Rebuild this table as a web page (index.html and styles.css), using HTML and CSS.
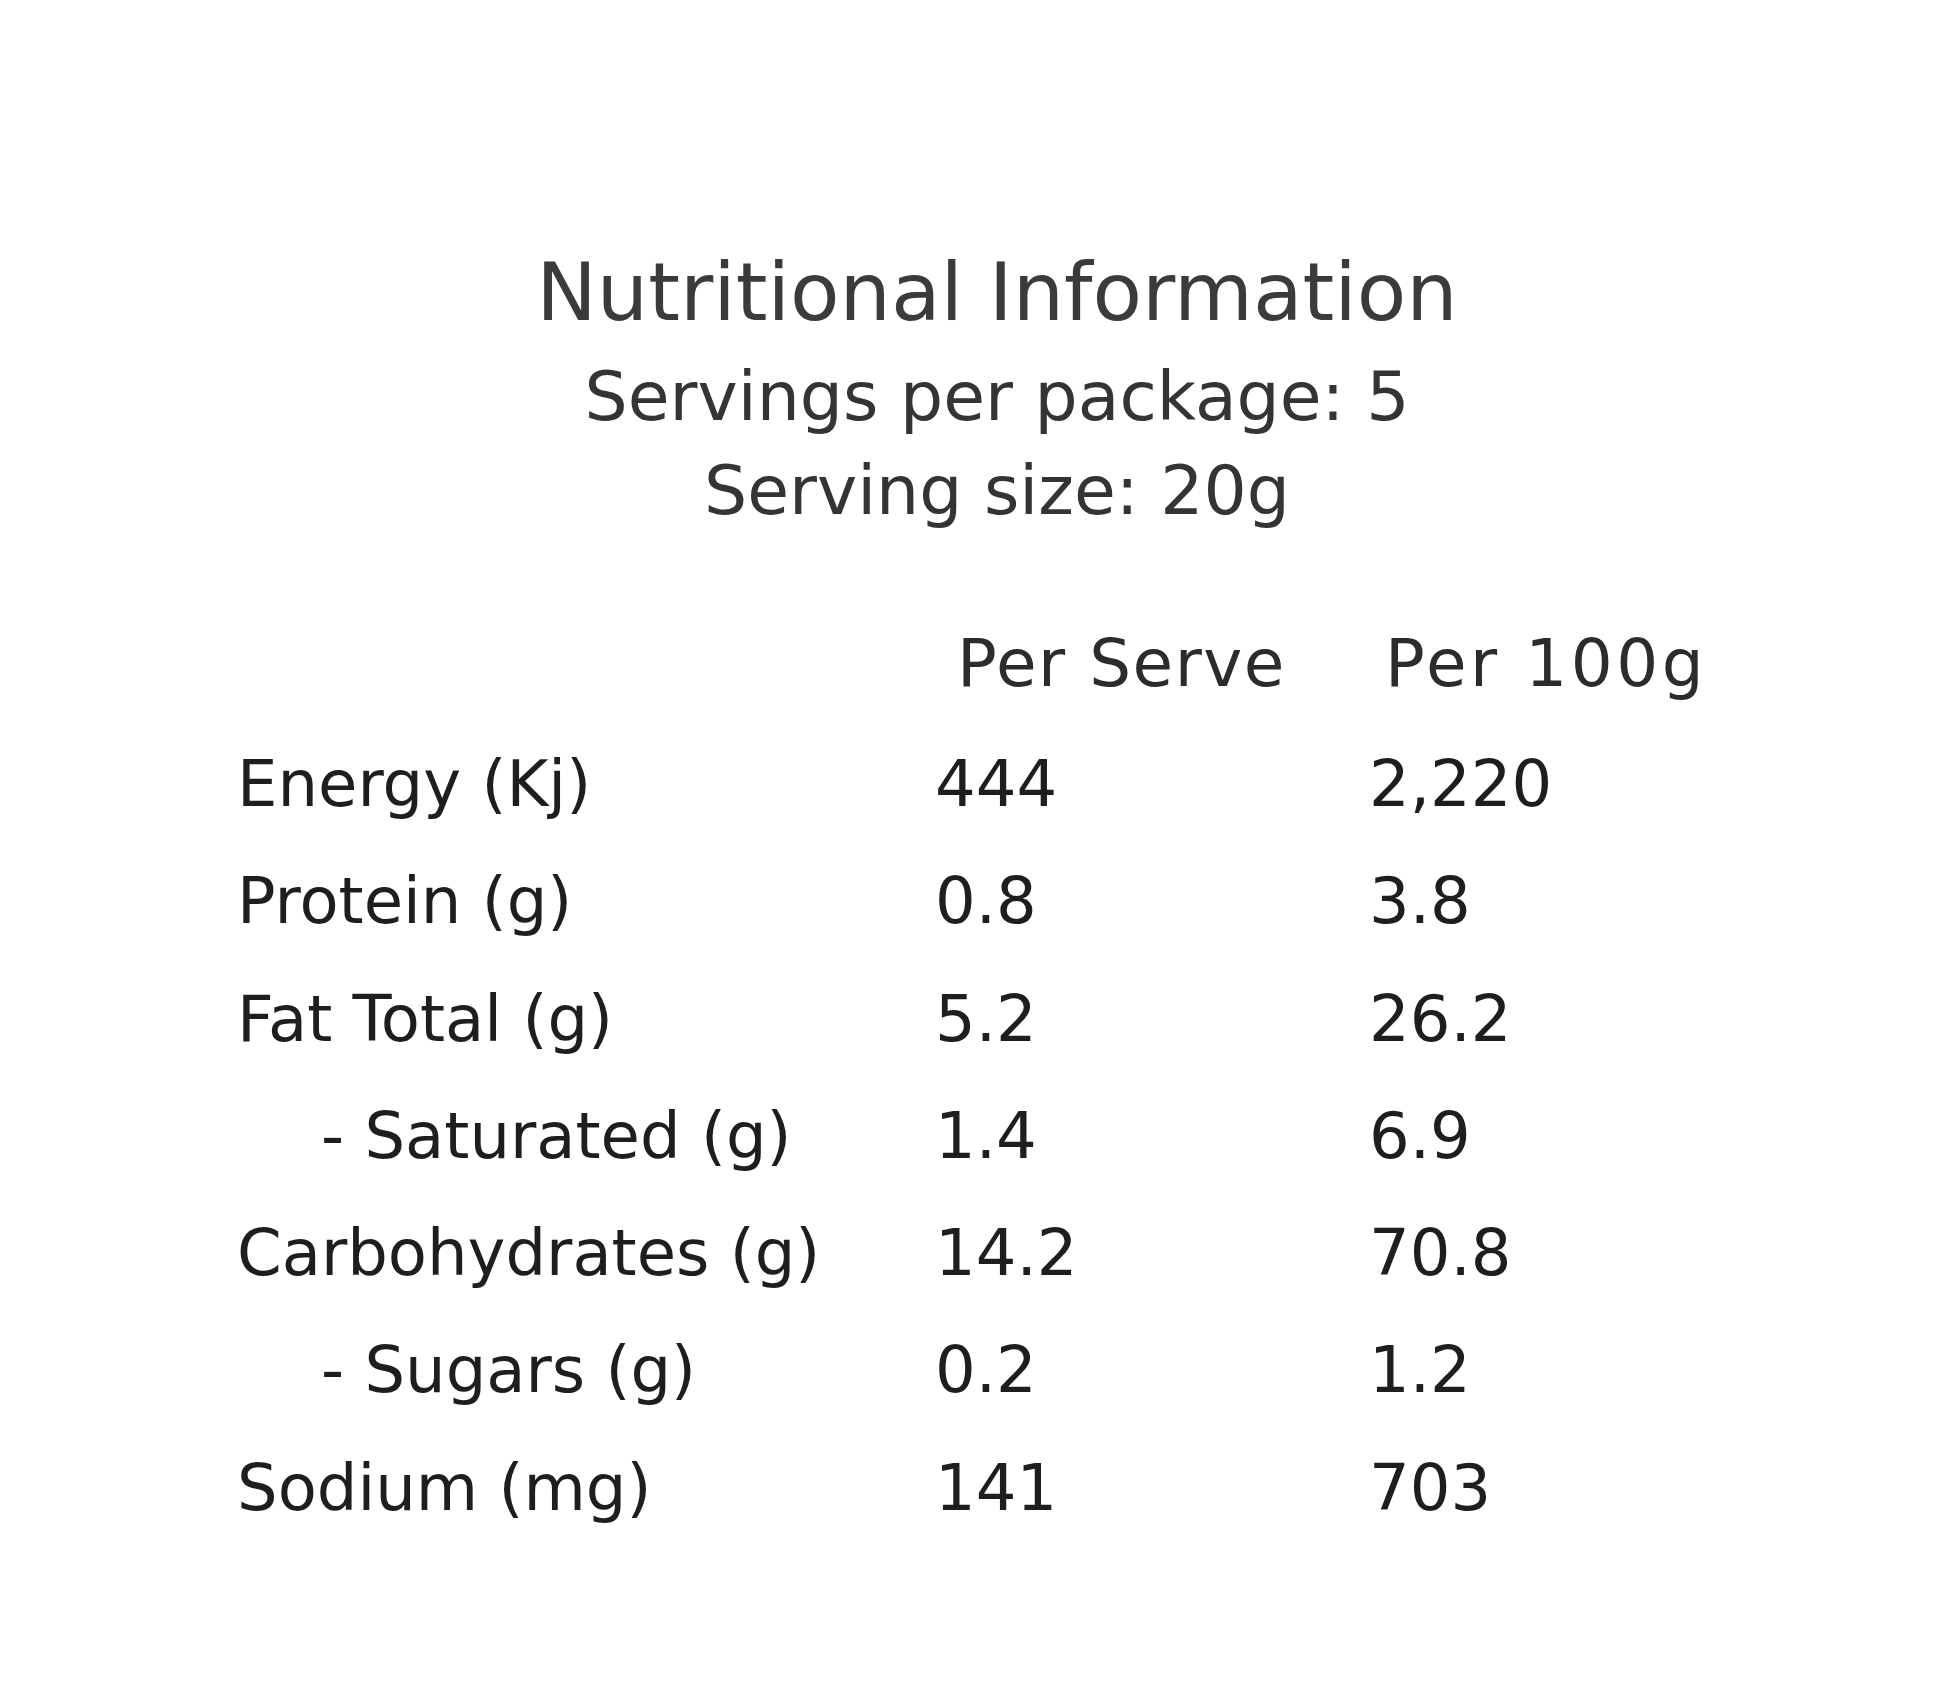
FILE: index.html
```html
<!DOCTYPE html>
<html lang="en">
<head>
<meta charset="utf-8">
<title>Nutritional Information</title>
<link rel="stylesheet" href="styles.css">
</head>
<body>
<main class="panel">
  <header class="head">
    <h1 class="title">Nutritional Information</h1>
    <p class="meta">Servings per package: 5</p>
    <p class="meta">Serving size: 20g</p>
  </header>
  <section class="facts">
    <div class="cell"></div>
    <div class="cell colhead colhead-serve">Per Serve</div>
    <div class="cell colhead colhead-100">Per 100g</div>

    <div class="cell name">Energy (Kj)</div>
    <div class="cell val">444</div>
    <div class="cell val">2,220</div>

    <div class="cell name">Protein (g)</div>
    <div class="cell val">0.8</div>
    <div class="cell val">3.8</div>

    <div class="cell name">Fat Total (g)</div>
    <div class="cell val">5.2</div>
    <div class="cell val">26.2</div>

    <div class="cell name sub">- Saturated (g)</div>
    <div class="cell val">1.4</div>
    <div class="cell val">6.9</div>

    <div class="cell name">Carbohydrates (g)</div>
    <div class="cell val">14.2</div>
    <div class="cell val">70.8</div>

    <div class="cell name sub">- Sugars (g)</div>
    <div class="cell val">0.2</div>
    <div class="cell val">1.2</div>

    <div class="cell name">Sodium (mg)</div>
    <div class="cell val">141</div>
    <div class="cell val">703</div>
  </section>
</main>
</body>
</html>
```
FILE: styles.css
```css
html, body {
  margin: 0;
  padding: 0;
  background: #ffffff;
}

body {
  font-family: "DejaVu Sans", "Liberation Sans", sans-serif;
  color: #222222;
}

.panel {
  width: 1948px;
  min-height: 1690px;
  padding-top: 238px;
  box-sizing: border-box;
}

.head {
  margin-left: 46px;
  text-align: center;
}

.title {
  margin: 0 0 4px;
  font-size: 81px;
  line-height: 108px;
  font-weight: normal;
  color: #3b3b3b;
}

.meta {
  margin: 0;
  font-size: 68px;
  line-height: 94px;
  color: #343434;
}

.facts {
  display: grid;
  grid-template-columns: 698px 434px auto;
  padding-left: 237px;
  margin-top: 86px;
}

.colhead {
  font-size: 66px;
  line-height: 80px;
  letter-spacing: 1.5px;
  color: #2c2c2c;
  margin-bottom: 22px;
}

.colhead-serve {
  padding-left: 22px;
}

.colhead-100 {
  padding-left: 16px;
  letter-spacing: 3.5px;
}

.name,
.val {
  font-size: 64px;
  line-height: 117.3px;
  color: #1e1e1e;
  white-space: nowrap;
}

.sub {
  padding-left: 84px;
}
```
